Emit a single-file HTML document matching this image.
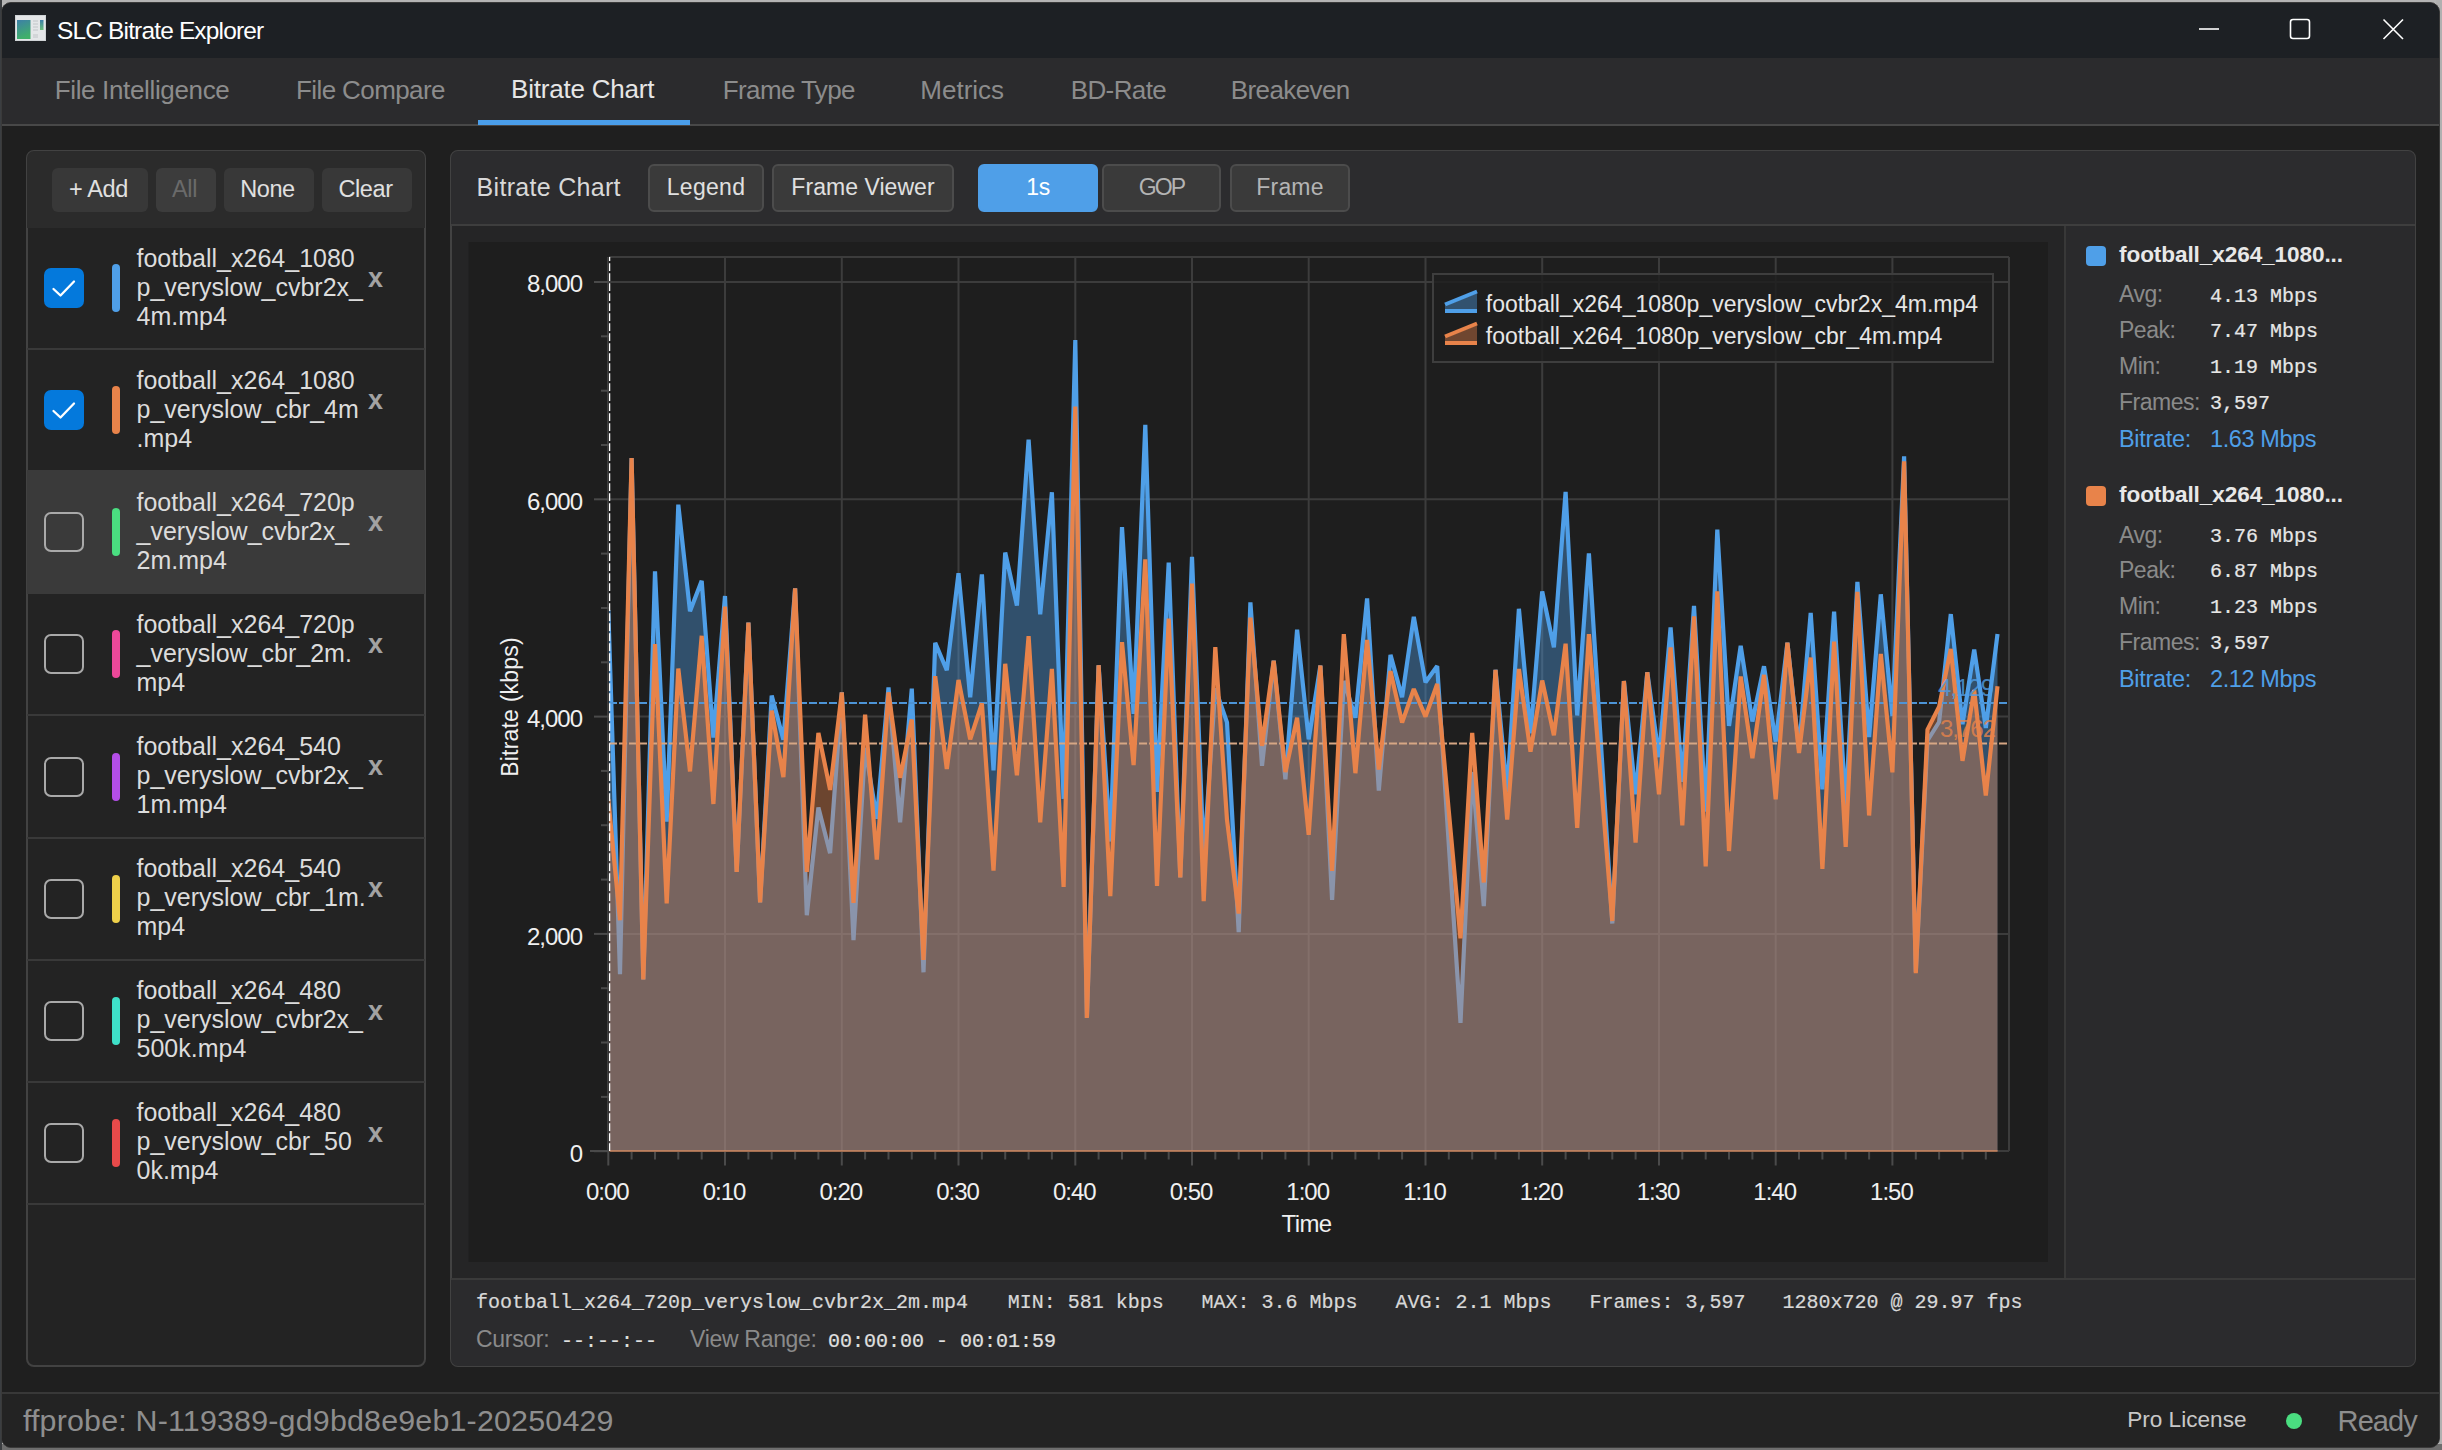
<!DOCTYPE html><html><head><meta charset="utf-8"><style>
html,body{margin:0;padding:0;}
body{width:2442px;height:1450px;position:relative;overflow:hidden;background:#b9b9b9;font-family:'Liberation Sans',sans-serif;}
div{box-sizing:border-box;}
</style></head><body>
<div style="position:absolute;left:0px;top:0px;width:2442px;height:3px;background:#b4b4b4;"></div>
<div style="position:absolute;left:2436px;top:0px;width:6px;height:1450px;background:#b0b0b0;"></div>
<div style="position:absolute;left:0px;top:1444px;width:2442px;height:6px;background:#6e6e6e;"></div>
<div style="position:absolute;left:0px;top:0px;width:2px;height:1450px;background:#3b3e41;"></div>
<div style="position:absolute;left:1px;top:2px;width:2439px;height:1446px;background:#1f1f1f;border-radius:10px;border:1px solid #3a3a3a;overflow:hidden;"></div>
<div style="position:absolute;left:2px;top:3px;width:2437px;height:55px;background:#1d2024;border-radius:9px 9px 0 0;"></div>
<div style="position:absolute;left:2px;top:58px;width:2437px;height:66px;background:#2b2b2d;"></div>
<div style="position:absolute;left:2px;top:124px;width:2437px;height:2px;background:#484848;"></div>
<svg style="position:absolute;left:15px;top:15px" width="32" height="27" viewBox="0 0 32 27">
<rect x="0.5" y="0.5" width="30" height="25" fill="#e4e6e8" stroke="#cfd3d6"/>
<defs><linearGradient id="ig" x1="0" y1="0" x2="0.3" y2="1"><stop offset="0" stop-color="#3d7fa8"/><stop offset="1" stop-color="#3fb06a"/></linearGradient>
<linearGradient id="ig2" x1="0" y1="0" x2="0" y2="1"><stop offset="0" stop-color="#3d7fa8"/><stop offset="1" stop-color="#6bbf7a"/></linearGradient></defs>
<rect x="2" y="5" width="13.5" height="19" fill="url(#ig)"/>
<rect x="25" y="5" width="3.5" height="10" fill="url(#ig2)"/>
<g stroke="#b8bcc0" stroke-width="0.8"><line x1="18" y1="6" x2="23" y2="6"/><line x1="18" y1="9" x2="23" y2="9"/><line x1="18" y1="12" x2="23" y2="12"/><line x1="18" y1="15" x2="23" y2="15"/><line x1="18" y1="20" x2="23" y2="20"/><line x1="18" y1="22" x2="23" y2="22"/></g>
</svg>
<div style="position:absolute;top:19.2px;font-family:'Liberation Sans', sans-serif;font-size:24.5px;line-height:1;color:#ffffff;white-space:pre;letter-spacing:-0.85px;left:57.0px;">SLC Bitrate Explorer</div>
<svg style="position:absolute;left:2180px;top:10px" width="240" height="40" viewBox="2180 10 240 40">
<line x1="2199" y1="29" x2="2219" y2="29" stroke="#fff" stroke-width="1.6"/>
<rect x="2290.5" y="19.5" width="19" height="19" rx="2.5" fill="none" stroke="#fff" stroke-width="1.6"/>
<path d="M2383.5 19.5 L2403 39 M2403 19.5 L2383.5 39" stroke="#fff" stroke-width="1.6"/>
</svg>
<div style="position:absolute;top:77.4px;font-family:'Liberation Sans', sans-serif;font-size:26px;line-height:1;color:#8c8c8c;white-space:pre;letter-spacing:-0.35px;left:54.7px;">File Intelligence</div>
<div style="position:absolute;top:77.4px;font-family:'Liberation Sans', sans-serif;font-size:26px;line-height:1;color:#8c8c8c;white-space:pre;letter-spacing:-0.6px;left:296.0px;">File Compare</div>
<div style="position:absolute;top:75.9px;font-family:'Liberation Sans', sans-serif;font-size:26px;line-height:1;color:#e6e6e6;white-space:pre;letter-spacing:-0.2px;left:511.0px;">Bitrate Chart</div>
<div style="position:absolute;top:77.4px;font-family:'Liberation Sans', sans-serif;font-size:26px;line-height:1;color:#8c8c8c;white-space:pre;letter-spacing:-0.6px;left:722.7px;">Frame Type</div>
<div style="position:absolute;top:77.4px;font-family:'Liberation Sans', sans-serif;font-size:26px;line-height:1;color:#8c8c8c;white-space:pre;left:920.3px;">Metrics</div>
<div style="position:absolute;top:77.4px;font-family:'Liberation Sans', sans-serif;font-size:26px;line-height:1;color:#8c8c8c;white-space:pre;letter-spacing:-0.6px;left:1070.7px;">BD-Rate</div>
<div style="position:absolute;top:77.4px;font-family:'Liberation Sans', sans-serif;font-size:26px;line-height:1;color:#8c8c8c;white-space:pre;letter-spacing:-0.6px;left:1230.8px;">Breakeven</div>
<div style="position:absolute;left:478px;top:120px;width:212px;height:4.5px;background:#4a9eea;"></div>
<div style="position:absolute;left:26px;top:150px;width:400px;height:1217px;background:#232323;border:2px solid #424242;border-radius:8px;overflow:hidden;"></div>
<div style="position:absolute;left:27px;top:151px;width:398px;height:77px;background:#2b2b2b;border-radius:7px 7px 0 0;"></div>
<div style="position:absolute;left:52px;top:168px;width:96px;height:44px;background:#383838;border-radius:6px;"></div>
<div style="position:absolute;top:177.5px;font-family:'Liberation Sans', sans-serif;font-size:23.5px;line-height:1;color:#e0e0e0;white-space:pre;letter-spacing:-0.4px;left:98.5px;transform:translateX(-50%);">+ Add</div>
<div style="position:absolute;left:156px;top:168px;width:60px;height:44px;background:#3c3c3c;border-radius:6px;"></div>
<div style="position:absolute;top:177.5px;font-family:'Liberation Sans', sans-serif;font-size:23.5px;line-height:1;color:#6a6a6a;white-space:pre;letter-spacing:-0.4px;left:184.5px;transform:translateX(-50%);">All</div>
<div style="position:absolute;left:224px;top:168px;width:90px;height:44px;background:#383838;border-radius:6px;"></div>
<div style="position:absolute;top:177.5px;font-family:'Liberation Sans', sans-serif;font-size:23.5px;line-height:1;color:#e0e0e0;white-space:pre;letter-spacing:-0.4px;left:267.5px;transform:translateX(-50%);">None</div>
<div style="position:absolute;left:322px;top:168px;width:90px;height:44px;background:#383838;border-radius:6px;"></div>
<div style="position:absolute;top:177.5px;font-family:'Liberation Sans', sans-serif;font-size:23.5px;line-height:1;color:#e0e0e0;white-space:pre;letter-spacing:-0.4px;left:365.5px;transform:translateX(-50%);">Clear</div>
<div style="position:absolute;left:27px;top:348px;width:398px;height:2px;background:#393939;"></div>
<div style="position:absolute;left:44px;top:268.0px;width:40px;height:40px;border-radius:7px;background:#0479dc;"></div>
<svg style="position:absolute;left:44px;top:268.0px" width="40" height="40"><path d="M9.5 21 L16.5 27.5 L30 13.5" fill="none" stroke="#fff" stroke-width="2.3" stroke-linecap="round" stroke-linejoin="round"/></svg>
<div style="position:absolute;left:112px;top:264.0px;width:8px;height:48px;background:#4f9fe8;border-radius:4px;"></div>
<div style="position:absolute;top:245.8px;font-family:'Liberation Sans', sans-serif;font-size:25px;line-height:1;color:#dcdcdc;white-space:pre;left:136.5px;">football_x264_1080</div>
<div style="position:absolute;top:274.6px;font-family:'Liberation Sans', sans-serif;font-size:25px;line-height:1;color:#dcdcdc;white-space:pre;left:136.5px;">p_veryslow_cvbr2x_</div>
<div style="position:absolute;top:303.6px;font-family:'Liberation Sans', sans-serif;font-size:25px;line-height:1;color:#dcdcdc;white-space:pre;left:136.5px;">4m.mp4</div>
<div style="position:absolute;top:264.6px;font-family:'Liberation Sans', sans-serif;font-size:27px;line-height:1;color:#a2a2a2;white-space:pre;font-weight:bold;left:375.5px;transform:translateX(-50%);">x</div>
<div style="position:absolute;left:44px;top:390.15px;width:40px;height:40px;border-radius:7px;background:#0479dc;"></div>
<svg style="position:absolute;left:44px;top:390.15px" width="40" height="40"><path d="M9.5 21 L16.5 27.5 L30 13.5" fill="none" stroke="#fff" stroke-width="2.3" stroke-linecap="round" stroke-linejoin="round"/></svg>
<div style="position:absolute;left:112px;top:386.15px;width:8px;height:48px;background:#e8834a;border-radius:4px;"></div>
<div style="position:absolute;top:367.9px;font-family:'Liberation Sans', sans-serif;font-size:25px;line-height:1;color:#dcdcdc;white-space:pre;left:136.5px;">football_x264_1080</div>
<div style="position:absolute;top:396.8px;font-family:'Liberation Sans', sans-serif;font-size:25px;line-height:1;color:#dcdcdc;white-space:pre;left:136.5px;">p_veryslow_cbr_4m</div>
<div style="position:absolute;top:425.7px;font-family:'Liberation Sans', sans-serif;font-size:25px;line-height:1;color:#dcdcdc;white-space:pre;left:136.5px;">.mp4</div>
<div style="position:absolute;top:386.7px;font-family:'Liberation Sans', sans-serif;font-size:27px;line-height:1;color:#a2a2a2;white-space:pre;font-weight:bold;left:375.5px;transform:translateX(-50%);">x</div>
<div style="position:absolute;left:27px;top:470px;width:398px;height:124px;background:#3a3a3a;"></div>
<div style="position:absolute;left:44px;top:512.3px;width:40px;height:40px;border-radius:7px;border:2px solid #a9a9a9;"></div>
<div style="position:absolute;left:112px;top:508.29999999999995px;width:8px;height:48px;background:#4ade80;border-radius:4px;"></div>
<div style="position:absolute;top:489.9px;font-family:'Liberation Sans', sans-serif;font-size:25px;line-height:1;color:#dcdcdc;white-space:pre;left:136.5px;">football_x264_720p</div>
<div style="position:absolute;top:518.9px;font-family:'Liberation Sans', sans-serif;font-size:25px;line-height:1;color:#dcdcdc;white-space:pre;left:136.5px;">_veryslow_cvbr2x_</div>
<div style="position:absolute;top:547.8px;font-family:'Liberation Sans', sans-serif;font-size:25px;line-height:1;color:#dcdcdc;white-space:pre;left:136.5px;">2m.mp4</div>
<div style="position:absolute;top:508.8px;font-family:'Liberation Sans', sans-serif;font-size:27px;line-height:1;color:#a2a2a2;white-space:pre;font-weight:bold;left:375.5px;transform:translateX(-50%);">x</div>
<div style="position:absolute;left:27px;top:714px;width:398px;height:2px;background:#393939;"></div>
<div style="position:absolute;left:44px;top:634.45px;width:40px;height:40px;border-radius:7px;border:2px solid #a9a9a9;"></div>
<div style="position:absolute;left:112px;top:630.45px;width:8px;height:48px;background:#ec4899;border-radius:4px;"></div>
<div style="position:absolute;top:612.0px;font-family:'Liberation Sans', sans-serif;font-size:25px;line-height:1;color:#dcdcdc;white-space:pre;left:136.5px;">football_x264_720p</div>
<div style="position:absolute;top:640.9px;font-family:'Liberation Sans', sans-serif;font-size:25px;line-height:1;color:#dcdcdc;white-space:pre;left:136.5px;">_veryslow_cbr_2m.</div>
<div style="position:absolute;top:669.8px;font-family:'Liberation Sans', sans-serif;font-size:25px;line-height:1;color:#dcdcdc;white-space:pre;left:136.5px;">mp4</div>
<div style="position:absolute;top:631.0px;font-family:'Liberation Sans', sans-serif;font-size:27px;line-height:1;color:#a2a2a2;white-space:pre;font-weight:bold;left:375.5px;transform:translateX(-50%);">x</div>
<div style="position:absolute;left:27px;top:837px;width:398px;height:2px;background:#393939;"></div>
<div style="position:absolute;left:44px;top:756.6px;width:40px;height:40px;border-radius:7px;border:2px solid #a9a9a9;"></div>
<div style="position:absolute;left:112px;top:752.6px;width:8px;height:48px;background:#b44ee8;border-radius:4px;"></div>
<div style="position:absolute;top:734.1px;font-family:'Liberation Sans', sans-serif;font-size:25px;line-height:1;color:#dcdcdc;white-space:pre;left:136.5px;">football_x264_540</div>
<div style="position:absolute;top:763.0px;font-family:'Liberation Sans', sans-serif;font-size:25px;line-height:1;color:#dcdcdc;white-space:pre;left:136.5px;">p_veryslow_cvbr2x_</div>
<div style="position:absolute;top:791.9px;font-family:'Liberation Sans', sans-serif;font-size:25px;line-height:1;color:#dcdcdc;white-space:pre;left:136.5px;">1m.mp4</div>
<div style="position:absolute;top:753.1px;font-family:'Liberation Sans', sans-serif;font-size:27px;line-height:1;color:#a2a2a2;white-space:pre;font-weight:bold;left:375.5px;transform:translateX(-50%);">x</div>
<div style="position:absolute;left:27px;top:959px;width:398px;height:2px;background:#393939;"></div>
<div style="position:absolute;left:44px;top:878.75px;width:40px;height:40px;border-radius:7px;border:2px solid #a9a9a9;"></div>
<div style="position:absolute;left:112px;top:874.75px;width:8px;height:48px;background:#eed04a;border-radius:4px;"></div>
<div style="position:absolute;top:856.2px;font-family:'Liberation Sans', sans-serif;font-size:25px;line-height:1;color:#dcdcdc;white-space:pre;left:136.5px;">football_x264_540</div>
<div style="position:absolute;top:885.1px;font-family:'Liberation Sans', sans-serif;font-size:25px;line-height:1;color:#dcdcdc;white-space:pre;left:136.5px;">p_veryslow_cbr_1m.</div>
<div style="position:absolute;top:914.0px;font-family:'Liberation Sans', sans-serif;font-size:25px;line-height:1;color:#dcdcdc;white-space:pre;left:136.5px;">mp4</div>
<div style="position:absolute;top:875.3px;font-family:'Liberation Sans', sans-serif;font-size:27px;line-height:1;color:#a2a2a2;white-space:pre;font-weight:bold;left:375.5px;transform:translateX(-50%);">x</div>
<div style="position:absolute;left:27px;top:1081px;width:398px;height:2px;background:#393939;"></div>
<div style="position:absolute;left:44px;top:1000.9000000000001px;width:40px;height:40px;border-radius:7px;border:2px solid #a9a9a9;"></div>
<div style="position:absolute;left:112px;top:996.9000000000001px;width:8px;height:48px;background:#3ee0c8;border-radius:4px;"></div>
<div style="position:absolute;top:978.3px;font-family:'Liberation Sans', sans-serif;font-size:25px;line-height:1;color:#dcdcdc;white-space:pre;left:136.5px;">football_x264_480</div>
<div style="position:absolute;top:1007.2px;font-family:'Liberation Sans', sans-serif;font-size:25px;line-height:1;color:#dcdcdc;white-space:pre;left:136.5px;">p_veryslow_cvbr2x_</div>
<div style="position:absolute;top:1036.1px;font-family:'Liberation Sans', sans-serif;font-size:25px;line-height:1;color:#dcdcdc;white-space:pre;left:136.5px;">500k.mp4</div>
<div style="position:absolute;top:997.5px;font-family:'Liberation Sans', sans-serif;font-size:27px;line-height:1;color:#a2a2a2;white-space:pre;font-weight:bold;left:375.5px;transform:translateX(-50%);">x</div>
<div style="position:absolute;left:27px;top:1203px;width:398px;height:2px;background:#393939;"></div>
<div style="position:absolute;left:44px;top:1123.0500000000002px;width:40px;height:40px;border-radius:7px;border:2px solid #a9a9a9;"></div>
<div style="position:absolute;left:112px;top:1119.0500000000002px;width:8px;height:48px;background:#e84a4a;border-radius:4px;"></div>
<div style="position:absolute;top:1100.4px;font-family:'Liberation Sans', sans-serif;font-size:25px;line-height:1;color:#dcdcdc;white-space:pre;left:136.5px;">football_x264_480</div>
<div style="position:absolute;top:1129.3px;font-family:'Liberation Sans', sans-serif;font-size:25px;line-height:1;color:#dcdcdc;white-space:pre;left:136.5px;">p_veryslow_cbr_50</div>
<div style="position:absolute;top:1158.2px;font-family:'Liberation Sans', sans-serif;font-size:25px;line-height:1;color:#dcdcdc;white-space:pre;left:136.5px;">0k.mp4</div>
<div style="position:absolute;top:1119.6px;font-family:'Liberation Sans', sans-serif;font-size:27px;line-height:1;color:#a2a2a2;white-space:pre;font-weight:bold;left:375.5px;transform:translateX(-50%);">x</div>
<div style="position:absolute;left:450px;top:150px;width:1966px;height:1217px;background:#252526;border:2px solid #424242;border-radius:8px;overflow:hidden;"></div>
<div style="position:absolute;left:451px;top:151px;width:1964px;height:74px;background:#2c2c2e;border-radius:7px 7px 0 0;"></div>
<div style="position:absolute;left:451px;top:224px;width:1964px;height:2px;background:#3e3e3e;"></div>
<div style="position:absolute;top:175.3px;font-family:'Liberation Sans', sans-serif;font-size:25px;line-height:1;color:#d8d8d8;white-space:pre;letter-spacing:0.3px;left:476.6px;">Bitrate Chart</div>
<div style="position:absolute;left:648px;top:164px;width:116px;height:48px;background:#3a3a3a;border-radius:6px;border:2px solid #4c4c4c;"></div>
<div style="position:absolute;top:176.4px;font-family:'Liberation Sans', sans-serif;font-size:23px;line-height:1;color:#e0e0e0;white-space:pre;letter-spacing:0.3px;left:706.0px;transform:translateX(-50%);">Legend</div>
<div style="position:absolute;left:772px;top:164px;width:182px;height:48px;background:#3a3a3a;border-radius:6px;border:2px solid #4c4c4c;"></div>
<div style="position:absolute;top:176.4px;font-family:'Liberation Sans', sans-serif;font-size:23px;line-height:1;color:#e0e0e0;white-space:pre;letter-spacing:0.05px;left:863.0px;transform:translateX(-50%);">Frame Viewer</div>
<div style="position:absolute;left:978px;top:164px;width:120px;height:48px;background:#4f9fe8;border-radius:6px;border:2px solid #4f9fe8;"></div>
<div style="position:absolute;top:176.4px;font-family:'Liberation Sans', sans-serif;font-size:23px;line-height:1;color:#ffffff;white-space:pre;letter-spacing:-0.3px;left:1038.0px;transform:translateX(-50%);">1s</div>
<div style="position:absolute;left:1102px;top:164px;width:119px;height:48px;background:#3a3a3a;border-radius:6px;border:2px solid #4c4c4c;"></div>
<div style="position:absolute;top:176.4px;font-family:'Liberation Sans', sans-serif;font-size:23px;line-height:1;color:#b4b4b4;white-space:pre;letter-spacing:-1.8px;left:1161.5px;transform:translateX(-50%);">GOP</div>
<div style="position:absolute;left:1230px;top:164px;width:120px;height:48px;background:#3a3a3a;border-radius:6px;border:2px solid #4c4c4c;"></div>
<div style="position:absolute;top:176.4px;font-family:'Liberation Sans', sans-serif;font-size:23px;line-height:1;color:#b4b4b4;white-space:pre;letter-spacing:0.2px;left:1290.0px;transform:translateX(-50%);">Frame</div>
<div style="position:absolute;left:2064px;top:226px;width:2px;height:1053px;background:#383838;"></div>
<div style="position:absolute;left:2066px;top:226px;width:349px;height:1053px;background:#2a2a2c;"></div>
<div style="position:absolute;left:451px;top:1278px;width:1964px;height:2px;background:#3a3a3a;"></div>
<div style="position:absolute;left:451px;top:1280px;width:1964px;height:86px;background:#2b2b2d;border-radius:0 0 7px 7px;"></div>
<div style="position:absolute;left:2086px;top:245.5px;width:20px;height:20px;border-radius:4px;background:#4f9fe8"></div>
<div style="position:absolute;top:244.1px;font-family:'Liberation Sans', sans-serif;font-size:22.6px;line-height:1;color:#e8e8e8;white-space:pre;font-weight:bold;letter-spacing:-0.1px;left:2119.0px;">football_x264_1080...</div>
<div style="position:absolute;top:283.4px;font-family:'Liberation Sans', sans-serif;font-size:23px;line-height:1;color:#8a8a8a;white-space:pre;letter-spacing:-0.5px;left:2119.0px;">Avg:</div>
<div style="position:absolute;top:286.6px;font-family:'Liberation Mono', monospace;font-size:20px;line-height:1;color:#e6e6e6;white-space:pre;left:2210.0px;-webkit-text-stroke:0.2px currentColor;">4.13 Mbps</div>
<div style="position:absolute;top:319.2px;font-family:'Liberation Sans', sans-serif;font-size:23px;line-height:1;color:#8a8a8a;white-space:pre;letter-spacing:-0.5px;left:2119.0px;">Peak:</div>
<div style="position:absolute;top:322.4px;font-family:'Liberation Mono', monospace;font-size:20px;line-height:1;color:#e6e6e6;white-space:pre;left:2210.0px;-webkit-text-stroke:0.2px currentColor;">7.47 Mbps</div>
<div style="position:absolute;top:355.1px;font-family:'Liberation Sans', sans-serif;font-size:23px;line-height:1;color:#8a8a8a;white-space:pre;letter-spacing:-0.5px;left:2119.0px;">Min:</div>
<div style="position:absolute;top:358.2px;font-family:'Liberation Mono', monospace;font-size:20px;line-height:1;color:#e6e6e6;white-space:pre;left:2210.0px;-webkit-text-stroke:0.2px currentColor;">1.19 Mbps</div>
<div style="position:absolute;top:390.8px;font-family:'Liberation Sans', sans-serif;font-size:23px;line-height:1;color:#8a8a8a;white-space:pre;letter-spacing:-0.5px;left:2119.0px;">Frames:</div>
<div style="position:absolute;top:394.0px;font-family:'Liberation Mono', monospace;font-size:20px;line-height:1;color:#e6e6e6;white-space:pre;left:2210.0px;-webkit-text-stroke:0.2px currentColor;">3,597</div>
<div style="position:absolute;top:428.2px;font-family:'Liberation Sans', sans-serif;font-size:23.5px;line-height:1;color:#4f9fe8;white-space:pre;letter-spacing:-0.3px;left:2119.0px;">Bitrate:</div>
<div style="position:absolute;top:428.2px;font-family:'Liberation Sans', sans-serif;font-size:23.5px;line-height:1;color:#4f9fe8;white-space:pre;letter-spacing:-0.4px;left:2210.0px;">1.63 Mbps</div>
<div style="position:absolute;left:2086px;top:485.5px;width:20px;height:20px;border-radius:4px;background:#e8834a"></div>
<div style="position:absolute;top:484.1px;font-family:'Liberation Sans', sans-serif;font-size:22.6px;line-height:1;color:#e8e8e8;white-space:pre;font-weight:bold;letter-spacing:-0.1px;left:2119.0px;">football_x264_1080...</div>
<div style="position:absolute;top:523.5px;font-family:'Liberation Sans', sans-serif;font-size:23px;line-height:1;color:#8a8a8a;white-space:pre;letter-spacing:-0.5px;left:2119.0px;">Avg:</div>
<div style="position:absolute;top:526.6px;font-family:'Liberation Mono', monospace;font-size:20px;line-height:1;color:#e6e6e6;white-space:pre;left:2210.0px;-webkit-text-stroke:0.2px currentColor;">3.76 Mbps</div>
<div style="position:absolute;top:559.2px;font-family:'Liberation Sans', sans-serif;font-size:23px;line-height:1;color:#8a8a8a;white-space:pre;letter-spacing:-0.5px;left:2119.0px;">Peak:</div>
<div style="position:absolute;top:562.4px;font-family:'Liberation Mono', monospace;font-size:20px;line-height:1;color:#e6e6e6;white-space:pre;left:2210.0px;-webkit-text-stroke:0.2px currentColor;">6.87 Mbps</div>
<div style="position:absolute;top:595.1px;font-family:'Liberation Sans', sans-serif;font-size:23px;line-height:1;color:#8a8a8a;white-space:pre;letter-spacing:-0.5px;left:2119.0px;">Min:</div>
<div style="position:absolute;top:598.2px;font-family:'Liberation Mono', monospace;font-size:20px;line-height:1;color:#e6e6e6;white-space:pre;left:2210.0px;-webkit-text-stroke:0.2px currentColor;">1.23 Mbps</div>
<div style="position:absolute;top:630.9px;font-family:'Liberation Sans', sans-serif;font-size:23px;line-height:1;color:#8a8a8a;white-space:pre;letter-spacing:-0.5px;left:2119.0px;">Frames:</div>
<div style="position:absolute;top:634.0px;font-family:'Liberation Mono', monospace;font-size:20px;line-height:1;color:#e6e6e6;white-space:pre;left:2210.0px;-webkit-text-stroke:0.2px currentColor;">3,597</div>
<div style="position:absolute;top:668.2px;font-family:'Liberation Sans', sans-serif;font-size:23.5px;line-height:1;color:#4f9fe8;white-space:pre;letter-spacing:-0.3px;left:2119.0px;">Bitrate:</div>
<div style="position:absolute;top:668.2px;font-family:'Liberation Sans', sans-serif;font-size:23.5px;line-height:1;color:#4f9fe8;white-space:pre;letter-spacing:-0.4px;left:2210.0px;">2.12 Mbps</div>
<div style="position:absolute;top:1292.6px;font-family:'Liberation Mono', monospace;font-size:20px;line-height:1;color:#d8d8d8;white-space:pre;left:476.0px;-webkit-text-stroke:0.2px currentColor;">football_x264_720p_veryslow_cvbr2x_2m.mp4</div>
<div style="position:absolute;top:1292.6px;font-family:'Liberation Mono', monospace;font-size:20px;line-height:1;color:#d8d8d8;white-space:pre;left:1007.7px;-webkit-text-stroke:0.2px currentColor;">MIN: 581 kbps</div>
<div style="position:absolute;top:1292.6px;font-family:'Liberation Mono', monospace;font-size:20px;line-height:1;color:#d8d8d8;white-space:pre;left:1201.4px;-webkit-text-stroke:0.2px currentColor;">MAX: 3.6 Mbps</div>
<div style="position:absolute;top:1292.6px;font-family:'Liberation Mono', monospace;font-size:20px;line-height:1;color:#d8d8d8;white-space:pre;left:1395.5px;-webkit-text-stroke:0.2px currentColor;">AVG: 2.1 Mbps</div>
<div style="position:absolute;top:1292.6px;font-family:'Liberation Mono', monospace;font-size:20px;line-height:1;color:#d8d8d8;white-space:pre;left:1589.5px;-webkit-text-stroke:0.2px currentColor;">Frames: 3,597</div>
<div style="position:absolute;top:1292.6px;font-family:'Liberation Mono', monospace;font-size:20px;line-height:1;color:#d8d8d8;white-space:pre;left:1782.4px;-webkit-text-stroke:0.2px currentColor;">1280x720 @ 29.97 fps</div>
<div style="position:absolute;top:1328.0px;font-family:'Liberation Sans', sans-serif;font-size:23px;line-height:1;color:#8a8a8a;white-space:pre;letter-spacing:-0.3px;left:476.0px;">Cursor:</div>
<div style="position:absolute;top:1332.4px;font-family:'Liberation Mono', monospace;font-size:20px;line-height:1;color:#e0e0e0;white-space:pre;left:561.0px;-webkit-text-stroke:0.2px currentColor;">--:--:--</div>
<div style="position:absolute;top:1328.0px;font-family:'Liberation Sans', sans-serif;font-size:23px;line-height:1;color:#8a8a8a;white-space:pre;letter-spacing:-0.3px;left:690.0px;">View Range:</div>
<div style="position:absolute;top:1332.4px;font-family:'Liberation Mono', monospace;font-size:20px;line-height:1;color:#e0e0e0;white-space:pre;left:828.0px;-webkit-text-stroke:0.2px currentColor;">00:00:00 - 00:01:59</div>
<div style="position:absolute;left:2px;top:1391.5px;width:2437px;height:2px;background:#383838;"></div>
<div style="position:absolute;left:2px;top:1393.5px;width:2437px;height:53.5px;background:#232323;border-radius:0 0 9px 9px;"></div>
<div style="position:absolute;top:1405.3px;font-family:'Liberation Sans', sans-serif;font-size:30.4px;line-height:1;color:#8e8e8e;white-space:pre;letter-spacing:0.19px;left:22.9px;">ffprobe: N-119389-gd9bd8e9eb1-20250429</div>
<div style="position:absolute;top:1409.1px;font-family:'Liberation Sans', sans-serif;font-size:22.6px;line-height:1;color:#c8c8c8;white-space:pre;left:2127.2px;">Pro License</div>
<div style="position:absolute;left:2286px;top:1413px;width:16px;height:16px;border-radius:50%;background:#4ade80"></div>
<div style="position:absolute;top:1406.8px;font-family:'Liberation Sans', sans-serif;font-size:29px;line-height:1;color:#8e8e8e;white-space:pre;letter-spacing:-0.9px;left:2337.6px;">Ready</div>
<svg style="position:absolute;left:467px;top:241px" width="1581" height="1021" viewBox="467 241 1581 1021"><rect x="468.5" y="242" width="1579.5" height="1020" fill="#1e1e1e"/><g stroke="#3c3c3c" stroke-width="2"><line x1="725.0" y1="257" x2="725.0" y2="1151"/><line x1="841.8" y1="257" x2="841.8" y2="1151"/><line x1="958.5" y1="257" x2="958.5" y2="1151"/><line x1="1075.3" y1="257" x2="1075.3" y2="1151"/><line x1="1192.0" y1="257" x2="1192.0" y2="1151"/><line x1="1308.7" y1="257" x2="1308.7" y2="1151"/><line x1="1425.5" y1="257" x2="1425.5" y2="1151"/><line x1="1542.2" y1="257" x2="1542.2" y2="1151"/><line x1="1659.0" y1="257" x2="1659.0" y2="1151"/><line x1="1775.7" y1="257" x2="1775.7" y2="1151"/><line x1="1892.4" y1="257" x2="1892.4" y2="1151"/><line x1="609" y1="933.9" x2="2009" y2="933.9"/><line x1="609" y1="716.6" x2="2009" y2="716.6"/><line x1="609" y1="499.3" x2="2009" y2="499.3"/><line x1="609" y1="282.0" x2="2009" y2="282.0"/><line x1="609" y1="257" x2="2009" y2="257"/><line x1="2009" y1="257" x2="2009" y2="1151"/><line x1="1997" y1="1151" x2="2009" y2="1151"/></g><defs><clipPath id="pc"><rect x="609.5" y="240" width="1400" height="913"/></clipPath></defs><g clip-path="url(#pc)"><polygon points="608.3,1151 608.3,610.1 620.0,974.1 631.6,458.0 643.3,979.5 655.0,571.4 666.7,821.6 678.3,504.7 690.0,611.2 701.7,580.8 713.4,737.5 725.0,596.0 736.7,871.9 748.4,622.5 760.1,902.3 771.7,695.5 783.4,739.7 795.1,588.3 806.8,915.2 818.4,807.4 830.1,853.2 841.8,692.4 853.5,940.1 865.1,747.8 876.8,818.7 888.5,687.4 900.1,822.4 911.8,688.6 923.5,972.3 935.2,642.8 946.8,670.2 958.5,573.2 970.2,697.3 981.9,574.4 993.5,770.4 1005.2,552.5 1016.9,605.5 1028.6,439.7 1040.2,614.3 1051.9,492.3 1063.6,798.8 1075.3,340.1 1086.9,1017.9 1098.6,665.2 1110.3,841.5 1122.0,527.1 1133.6,713.9 1145.3,424.8 1157.0,791.9 1168.7,562.6 1180.3,877.5 1192.0,556.9 1203.7,857.8 1215.3,688.4 1227.0,722.4 1238.7,932.2 1250.4,602.4 1262.0,765.8 1273.7,660.8 1285.4,779.4 1297.1,629.7 1308.7,739.4 1320.4,665.5 1332.1,899.9 1343.8,681.0 1355.4,717.7 1367.1,598.4 1378.8,790.6 1390.5,654.9 1402.1,697.2 1413.8,616.8 1425.5,682.3 1437.2,666.1 1448.8,844.5 1460.5,1022.8 1472.2,772.0 1483.8,906.1 1495.5,669.8 1507.2,791.9 1518.9,608.8 1530.5,733.3 1542.2,591.4 1553.9,647.4 1565.6,491.8 1577.2,715.5 1588.9,553.5 1600.6,738.3 1612.3,923.5 1623.9,681.0 1635.6,794.3 1647.3,672.3 1659.0,757.1 1670.6,627.5 1682.3,781.9 1694.0,605.9 1705.7,811.7 1717.3,529.7 1729.0,725.9 1740.7,645.7 1752.4,721.5 1764.0,666.2 1775.7,741.6 1787.4,642.7 1799.0,749.2 1810.7,612.9 1822.4,789.4 1834.1,611.6 1845.7,806.8 1857.4,581.9 1869.1,737.2 1880.8,594.3 1892.4,716.1 1904.1,456.3 1915.8,971.9 1927.5,740.5 1939.1,722.0 1950.8,614.1 1962.5,724.2 1974.2,649.5 1985.8,727.9 1997.5,634.0 1997.5,1151" fill="#4f9fe8" fill-opacity="0.39"/><polyline points="608.3,610.1 620.0,974.1 631.6,458.0 643.3,979.5 655.0,571.4 666.7,821.6 678.3,504.7 690.0,611.2 701.7,580.8 713.4,737.5 725.0,596.0 736.7,871.9 748.4,622.5 760.1,902.3 771.7,695.5 783.4,739.7 795.1,588.3 806.8,915.2 818.4,807.4 830.1,853.2 841.8,692.4 853.5,940.1 865.1,747.8 876.8,818.7 888.5,687.4 900.1,822.4 911.8,688.6 923.5,972.3 935.2,642.8 946.8,670.2 958.5,573.2 970.2,697.3 981.9,574.4 993.5,770.4 1005.2,552.5 1016.9,605.5 1028.6,439.7 1040.2,614.3 1051.9,492.3 1063.6,798.8 1075.3,340.1 1086.9,1017.9 1098.6,665.2 1110.3,841.5 1122.0,527.1 1133.6,713.9 1145.3,424.8 1157.0,791.9 1168.7,562.6 1180.3,877.5 1192.0,556.9 1203.7,857.8 1215.3,688.4 1227.0,722.4 1238.7,932.2 1250.4,602.4 1262.0,765.8 1273.7,660.8 1285.4,779.4 1297.1,629.7 1308.7,739.4 1320.4,665.5 1332.1,899.9 1343.8,681.0 1355.4,717.7 1367.1,598.4 1378.8,790.6 1390.5,654.9 1402.1,697.2 1413.8,616.8 1425.5,682.3 1437.2,666.1 1448.8,844.5 1460.5,1022.8 1472.2,772.0 1483.8,906.1 1495.5,669.8 1507.2,791.9 1518.9,608.8 1530.5,733.3 1542.2,591.4 1553.9,647.4 1565.6,491.8 1577.2,715.5 1588.9,553.5 1600.6,738.3 1612.3,923.5 1623.9,681.0 1635.6,794.3 1647.3,672.3 1659.0,757.1 1670.6,627.5 1682.3,781.9 1694.0,605.9 1705.7,811.7 1717.3,529.7 1729.0,725.9 1740.7,645.7 1752.4,721.5 1764.0,666.2 1775.7,741.6 1787.4,642.7 1799.0,749.2 1810.7,612.9 1822.4,789.4 1834.1,611.6 1845.7,806.8 1857.4,581.9 1869.1,737.2 1880.8,594.3 1892.4,716.1 1904.1,456.3 1915.8,971.9 1927.5,740.5 1939.1,722.0 1950.8,614.1 1962.5,724.2 1974.2,649.5 1985.8,727.9 1997.5,634.0" fill="none" stroke="#4f9fe8" stroke-width="4.2" stroke-linejoin="bevel"/><polygon points="608.3,1151 608.3,799.2 620.0,920.3 631.6,458.0 643.3,979.5 655.0,644.0 666.7,903.5 678.3,668.6 690.0,771.4 701.7,635.8 713.4,804.0 725.0,606.5 736.7,871.9 748.4,622.5 760.1,902.3 771.7,710.7 783.4,777.2 795.1,588.3 806.8,871.9 818.4,732.8 830.1,789.9 841.8,692.4 853.5,902.9 865.1,714.6 876.8,859.6 888.5,692.4 900.1,777.8 911.8,719.5 923.5,959.9 935.2,676.2 946.8,769.1 958.5,679.9 970.2,739.4 981.9,703.5 993.5,870.7 1005.2,663.8 1016.9,775.3 1028.6,636.1 1040.2,822.4 1051.9,668.8 1063.6,886.9 1075.3,406.5 1086.9,1017.9 1098.6,665.2 1110.3,896.2 1122.0,642.1 1133.6,765.1 1145.3,559.4 1157.0,885.8 1168.7,618.5 1180.3,877.5 1192.0,583.7 1203.7,901.2 1215.3,647.1 1227.0,819.8 1238.7,913.6 1250.4,617.7 1262.0,745.9 1273.7,660.8 1285.4,772.0 1297.1,717.6 1308.7,834.8 1320.4,665.5 1332.1,870.8 1343.8,634.2 1355.4,773.2 1367.1,639.9 1378.8,769.5 1390.5,671.1 1402.1,722.6 1413.8,689.0 1425.5,716.6 1437.2,684.0 1448.8,811.1 1460.5,938.4 1472.2,732.9 1483.8,882.5 1495.5,669.8 1507.2,819.7 1518.9,669.0 1530.5,751.7 1542.2,680.5 1553.9,735.3 1565.6,643.7 1577.2,827.9 1588.9,634.2 1600.6,777.4 1612.3,921.0 1623.9,681.0 1635.6,842.7 1647.3,672.3 1659.0,794.3 1670.6,647.4 1682.3,825.4 1694.0,616.3 1705.7,866.3 1717.3,591.4 1729.0,851.0 1740.7,676.5 1752.4,758.3 1764.0,674.9 1775.7,799.3 1787.4,642.7 1799.0,753.0 1810.7,657.6 1822.4,868.8 1834.1,641.5 1845.7,847.0 1857.4,591.8 1869.1,815.5 1880.8,653.9 1892.4,772.4 1904.1,461.3 1915.8,973.1 1927.5,729.6 1939.1,706.8 1950.8,648.9 1962.5,760.8 1974.2,690.0 1985.8,795.6 1997.5,686.3 1997.5,1151" fill="#e8834a" fill-opacity="0.39"/><line x1="609" y1="703" x2="2009" y2="703" stroke="#4d94d6" stroke-width="1.8" stroke-dasharray="8 2"/><line x1="609" y1="743.5" x2="2009" y2="743.5" stroke="#d6a684" stroke-width="1.8" stroke-dasharray="8 2"/><polyline points="608.3,799.2 620.0,920.3 631.6,458.0 643.3,979.5 655.0,644.0 666.7,903.5 678.3,668.6 690.0,771.4 701.7,635.8 713.4,804.0 725.0,606.5 736.7,871.9 748.4,622.5 760.1,902.3 771.7,710.7 783.4,777.2 795.1,588.3 806.8,871.9 818.4,732.8 830.1,789.9 841.8,692.4 853.5,902.9 865.1,714.6 876.8,859.6 888.5,692.4 900.1,777.8 911.8,719.5 923.5,959.9 935.2,676.2 946.8,769.1 958.5,679.9 970.2,739.4 981.9,703.5 993.5,870.7 1005.2,663.8 1016.9,775.3 1028.6,636.1 1040.2,822.4 1051.9,668.8 1063.6,886.9 1075.3,406.5 1086.9,1017.9 1098.6,665.2 1110.3,896.2 1122.0,642.1 1133.6,765.1 1145.3,559.4 1157.0,885.8 1168.7,618.5 1180.3,877.5 1192.0,583.7 1203.7,901.2 1215.3,647.1 1227.0,819.8 1238.7,913.6 1250.4,617.7 1262.0,745.9 1273.7,660.8 1285.4,772.0 1297.1,717.6 1308.7,834.8 1320.4,665.5 1332.1,870.8 1343.8,634.2 1355.4,773.2 1367.1,639.9 1378.8,769.5 1390.5,671.1 1402.1,722.6 1413.8,689.0 1425.5,716.6 1437.2,684.0 1448.8,811.1 1460.5,938.4 1472.2,732.9 1483.8,882.5 1495.5,669.8 1507.2,819.7 1518.9,669.0 1530.5,751.7 1542.2,680.5 1553.9,735.3 1565.6,643.7 1577.2,827.9 1588.9,634.2 1600.6,777.4 1612.3,921.0 1623.9,681.0 1635.6,842.7 1647.3,672.3 1659.0,794.3 1670.6,647.4 1682.3,825.4 1694.0,616.3 1705.7,866.3 1717.3,591.4 1729.0,851.0 1740.7,676.5 1752.4,758.3 1764.0,674.9 1775.7,799.3 1787.4,642.7 1799.0,753.0 1810.7,657.6 1822.4,868.8 1834.1,641.5 1845.7,847.0 1857.4,591.8 1869.1,815.5 1880.8,653.9 1892.4,772.4 1904.1,461.3 1915.8,973.1 1927.5,729.6 1939.1,706.8 1950.8,648.9 1962.5,760.8 1974.2,690.0 1985.8,795.6 1997.5,686.3" fill="none" stroke="#e8834a" stroke-width="4.2" stroke-linejoin="bevel"/><line x1="608.3" y1="1151" x2="1997.5" y2="1151" stroke="#d08a62" stroke-width="1.6"/></g><line x1="607.8" y1="257" x2="607.8" y2="1152" stroke="#3e3e3e" stroke-width="1.6"/><line x1="609.6" y1="1151" x2="609.6" y2="257" stroke="#ffffff" stroke-width="1.3" stroke-dasharray="7.8 2.2"/><g stroke="#4a4a4a" stroke-width="2"><line x1="594" y1="1151.2" x2="609" y2="1151.2"/><line x1="601" y1="1096.9" x2="609" y2="1096.9"/><line x1="601" y1="1042.5" x2="609" y2="1042.5"/><line x1="601" y1="988.2" x2="609" y2="988.2"/><line x1="594" y1="933.9" x2="609" y2="933.9"/><line x1="601" y1="879.6" x2="609" y2="879.6"/><line x1="601" y1="825.2" x2="609" y2="825.2"/><line x1="601" y1="770.9" x2="609" y2="770.9"/><line x1="594" y1="716.6" x2="609" y2="716.6"/><line x1="601" y1="662.3" x2="609" y2="662.3"/><line x1="601" y1="608.0" x2="609" y2="608.0"/><line x1="601" y1="553.6" x2="609" y2="553.6"/><line x1="594" y1="499.3" x2="609" y2="499.3"/><line x1="601" y1="445.0" x2="609" y2="445.0"/><line x1="601" y1="390.7" x2="609" y2="390.7"/><line x1="601" y1="336.3" x2="609" y2="336.3"/><line x1="594" y1="282.0" x2="609" y2="282.0"/><line x1="608.3" y1="1152" x2="608.3" y2="1165.5"/><line x1="631.6" y1="1152" x2="631.6" y2="1159.5"/><line x1="655.0" y1="1152" x2="655.0" y2="1159.5"/><line x1="678.3" y1="1152" x2="678.3" y2="1159.5"/><line x1="701.7" y1="1152" x2="701.7" y2="1159.5"/><line x1="725.0" y1="1152" x2="725.0" y2="1165.5"/><line x1="748.4" y1="1152" x2="748.4" y2="1159.5"/><line x1="771.7" y1="1152" x2="771.7" y2="1159.5"/><line x1="795.1" y1="1152" x2="795.1" y2="1159.5"/><line x1="818.4" y1="1152" x2="818.4" y2="1159.5"/><line x1="841.8" y1="1152" x2="841.8" y2="1165.5"/><line x1="865.1" y1="1152" x2="865.1" y2="1159.5"/><line x1="888.5" y1="1152" x2="888.5" y2="1159.5"/><line x1="911.8" y1="1152" x2="911.8" y2="1159.5"/><line x1="935.2" y1="1152" x2="935.2" y2="1159.5"/><line x1="958.5" y1="1152" x2="958.5" y2="1165.5"/><line x1="981.9" y1="1152" x2="981.9" y2="1159.5"/><line x1="1005.2" y1="1152" x2="1005.2" y2="1159.5"/><line x1="1028.6" y1="1152" x2="1028.6" y2="1159.5"/><line x1="1051.9" y1="1152" x2="1051.9" y2="1159.5"/><line x1="1075.3" y1="1152" x2="1075.3" y2="1165.5"/><line x1="1098.6" y1="1152" x2="1098.6" y2="1159.5"/><line x1="1122.0" y1="1152" x2="1122.0" y2="1159.5"/><line x1="1145.3" y1="1152" x2="1145.3" y2="1159.5"/><line x1="1168.7" y1="1152" x2="1168.7" y2="1159.5"/><line x1="1192.0" y1="1152" x2="1192.0" y2="1165.5"/><line x1="1215.3" y1="1152" x2="1215.3" y2="1159.5"/><line x1="1238.7" y1="1152" x2="1238.7" y2="1159.5"/><line x1="1262.0" y1="1152" x2="1262.0" y2="1159.5"/><line x1="1285.4" y1="1152" x2="1285.4" y2="1159.5"/><line x1="1308.7" y1="1152" x2="1308.7" y2="1165.5"/><line x1="1332.1" y1="1152" x2="1332.1" y2="1159.5"/><line x1="1355.4" y1="1152" x2="1355.4" y2="1159.5"/><line x1="1378.8" y1="1152" x2="1378.8" y2="1159.5"/><line x1="1402.1" y1="1152" x2="1402.1" y2="1159.5"/><line x1="1425.5" y1="1152" x2="1425.5" y2="1165.5"/><line x1="1448.8" y1="1152" x2="1448.8" y2="1159.5"/><line x1="1472.2" y1="1152" x2="1472.2" y2="1159.5"/><line x1="1495.5" y1="1152" x2="1495.5" y2="1159.5"/><line x1="1518.9" y1="1152" x2="1518.9" y2="1159.5"/><line x1="1542.2" y1="1152" x2="1542.2" y2="1165.5"/><line x1="1565.6" y1="1152" x2="1565.6" y2="1159.5"/><line x1="1588.9" y1="1152" x2="1588.9" y2="1159.5"/><line x1="1612.3" y1="1152" x2="1612.3" y2="1159.5"/><line x1="1635.6" y1="1152" x2="1635.6" y2="1159.5"/><line x1="1659.0" y1="1152" x2="1659.0" y2="1165.5"/><line x1="1682.3" y1="1152" x2="1682.3" y2="1159.5"/><line x1="1705.7" y1="1152" x2="1705.7" y2="1159.5"/><line x1="1729.0" y1="1152" x2="1729.0" y2="1159.5"/><line x1="1752.4" y1="1152" x2="1752.4" y2="1159.5"/><line x1="1775.7" y1="1152" x2="1775.7" y2="1165.5"/><line x1="1799.0" y1="1152" x2="1799.0" y2="1159.5"/><line x1="1822.4" y1="1152" x2="1822.4" y2="1159.5"/><line x1="1845.7" y1="1152" x2="1845.7" y2="1159.5"/><line x1="1869.1" y1="1152" x2="1869.1" y2="1159.5"/><line x1="1892.4" y1="1152" x2="1892.4" y2="1165.5"/><line x1="1915.8" y1="1152" x2="1915.8" y2="1159.5"/><line x1="1939.1" y1="1152" x2="1939.1" y2="1159.5"/><line x1="1962.5" y1="1152" x2="1962.5" y2="1159.5"/><line x1="1985.8" y1="1152" x2="1985.8" y2="1159.5"/><line x1="590" y1="1151" x2="609" y2="1151"/></g><rect x="1433" y="274" width="560" height="88" fill="#1e1e1e" fill-opacity="0.85" stroke="#3e3e3e" stroke-width="2"/><polygon points="1445,306 1477,293 1477,311 1445,311" fill="#4f9fe8" fill-opacity="0.4"/><line x1="1445" y1="304.5" x2="1477" y2="291.5" stroke="#4f9fe8" stroke-width="4"/><line x1="1445" y1="311" x2="1477" y2="311" stroke="#4f9fe8" stroke-width="4"/><polygon points="1445,338 1477,325 1477,343 1445,343" fill="#e8834a" fill-opacity="0.4"/><line x1="1445" y1="336.5" x2="1477" y2="323.5" stroke="#e8834a" stroke-width="4"/><line x1="1445" y1="343" x2="1477" y2="343" stroke="#e8834a" stroke-width="4"/></svg>
<div style="position:absolute;top:272.2px;font-family:'Liberation Sans', sans-serif;font-size:24px;line-height:1;color:#f0f0f0;white-space:pre;letter-spacing:-1.0px;right:1860.0px;">8,000</div>
<div style="position:absolute;top:489.7px;font-family:'Liberation Sans', sans-serif;font-size:24px;line-height:1;color:#f0f0f0;white-space:pre;letter-spacing:-1.0px;right:1860.0px;">6,000</div>
<div style="position:absolute;top:707.2px;font-family:'Liberation Sans', sans-serif;font-size:24px;line-height:1;color:#f0f0f0;white-space:pre;letter-spacing:-1.0px;right:1860.0px;">4,000</div>
<div style="position:absolute;top:924.6px;font-family:'Liberation Sans', sans-serif;font-size:24px;line-height:1;color:#f0f0f0;white-space:pre;letter-spacing:-1.0px;right:1860.0px;">2,000</div>
<div style="position:absolute;top:1142.1px;font-family:'Liberation Sans', sans-serif;font-size:24px;line-height:1;color:#f0f0f0;white-space:pre;letter-spacing:-1.0px;right:1860.0px;">0</div>
<div style="position:absolute;top:1180.0px;font-family:'Liberation Sans', sans-serif;font-size:24px;line-height:1;color:#f0f0f0;white-space:pre;letter-spacing:-1.0px;left:607.3px;transform:translateX(-50%);">0:00</div>
<div style="position:absolute;top:1180.0px;font-family:'Liberation Sans', sans-serif;font-size:24px;line-height:1;color:#f0f0f0;white-space:pre;letter-spacing:-1.0px;left:724.0px;transform:translateX(-50%);">0:10</div>
<div style="position:absolute;top:1180.0px;font-family:'Liberation Sans', sans-serif;font-size:24px;line-height:1;color:#f0f0f0;white-space:pre;letter-spacing:-1.0px;left:840.8px;transform:translateX(-50%);">0:20</div>
<div style="position:absolute;top:1180.0px;font-family:'Liberation Sans', sans-serif;font-size:24px;line-height:1;color:#f0f0f0;white-space:pre;letter-spacing:-1.0px;left:957.5px;transform:translateX(-50%);">0:30</div>
<div style="position:absolute;top:1180.0px;font-family:'Liberation Sans', sans-serif;font-size:24px;line-height:1;color:#f0f0f0;white-space:pre;letter-spacing:-1.0px;left:1074.3px;transform:translateX(-50%);">0:40</div>
<div style="position:absolute;top:1180.0px;font-family:'Liberation Sans', sans-serif;font-size:24px;line-height:1;color:#f0f0f0;white-space:pre;letter-spacing:-1.0px;left:1191.0px;transform:translateX(-50%);">0:50</div>
<div style="position:absolute;top:1180.0px;font-family:'Liberation Sans', sans-serif;font-size:24px;line-height:1;color:#f0f0f0;white-space:pre;letter-spacing:-1.0px;left:1307.7px;transform:translateX(-50%);">1:00</div>
<div style="position:absolute;top:1180.0px;font-family:'Liberation Sans', sans-serif;font-size:24px;line-height:1;color:#f0f0f0;white-space:pre;letter-spacing:-1.0px;left:1424.5px;transform:translateX(-50%);">1:10</div>
<div style="position:absolute;top:1180.0px;font-family:'Liberation Sans', sans-serif;font-size:24px;line-height:1;color:#f0f0f0;white-space:pre;letter-spacing:-1.0px;left:1541.2px;transform:translateX(-50%);">1:20</div>
<div style="position:absolute;top:1180.0px;font-family:'Liberation Sans', sans-serif;font-size:24px;line-height:1;color:#f0f0f0;white-space:pre;letter-spacing:-1.0px;left:1658.0px;transform:translateX(-50%);">1:30</div>
<div style="position:absolute;top:1180.0px;font-family:'Liberation Sans', sans-serif;font-size:24px;line-height:1;color:#f0f0f0;white-space:pre;letter-spacing:-1.0px;left:1774.7px;transform:translateX(-50%);">1:40</div>
<div style="position:absolute;top:1180.0px;font-family:'Liberation Sans', sans-serif;font-size:24px;line-height:1;color:#f0f0f0;white-space:pre;letter-spacing:-1.0px;left:1891.4px;transform:translateX(-50%);">1:50</div>
<div style="position:absolute;top:1211.6px;font-family:'Liberation Sans', sans-serif;font-size:24px;line-height:1;color:#f0f0f0;white-space:pre;letter-spacing:-0.6px;left:1306.5px;transform:translateX(-50%);">Time</div>
<div style="position:absolute;left:510px;top:706.5px;transform:translate(-50%,-50%) rotate(-90deg);font-family:'Liberation Sans',sans-serif;font-size:23px;line-height:1;color:#f0f0f0;white-space:pre;letter-spacing:0.2px">Bitrate (kbps)</div>
<div style="position:absolute;top:293.4px;font-family:'Liberation Sans', sans-serif;font-size:23px;line-height:1;color:#e6e6e6;white-space:pre;left:1485.8px;">football_x264_1080p_veryslow_cvbr2x_4m.mp4</div>
<div style="position:absolute;top:325.4px;font-family:'Liberation Sans', sans-serif;font-size:23px;line-height:1;color:#e6e6e6;white-space:pre;left:1485.8px;">football_x264_1080p_veryslow_cbr_4m.mp4</div>
<div style="position:absolute;top:676.1px;font-family:'Liberation Sans', sans-serif;font-size:24px;line-height:1;color:rgba(79,159,232,0.8);white-space:pre;letter-spacing:-1px;left:1938.0px;">4,129</div>
<div style="position:absolute;top:716.6px;font-family:'Liberation Sans', sans-serif;font-size:24px;line-height:1;color:rgba(232,131,74,0.8);white-space:pre;letter-spacing:-1px;left:1940.0px;">3,762</div>
</body></html>
